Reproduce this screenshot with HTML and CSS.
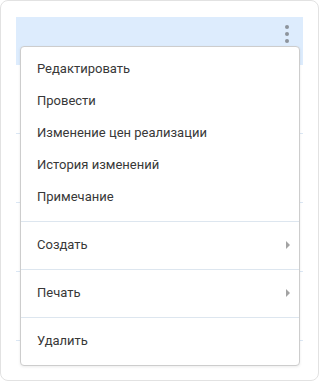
FILE: index.html
```html
<!DOCTYPE html>
<html>
<head>
    <title>Документ</title>
    <link rel="stylesheet" href="styles.css">
</head>
<body>
    <div class="card">
        <div class="table">
            <div class="table-head">
                <button class="kebab" aria-label="Действия">
                    <span></span><span></span><span></span>
                </button>
            </div>
            <div class="table-row"></div>
            <div class="table-row"></div>
            <div class="table-row"></div>
            <div class="table-row"></div>
        </div>

        <!-- Выпадающее меню действий -->
        <div class="menu">
            <div class="menu-group">
                <div class="menu-item">Редактировать</div>
                <div class="menu-item">Провести</div>
                <div class="menu-item">Изменение цен реализации</div>
                <div class="menu-item">История изменений</div>
                <div class="menu-item">Примечание</div>
            </div>
            <div class="menu-group">
                <div class="menu-item has-sub">Создать</div>
            </div>
            <div class="menu-group">
                <div class="menu-item has-sub">Печать</div>
            </div>
            <div class="menu-group">
                <div class="menu-item">Удалить</div>
            </div>
        </div>
    </div>
</body>
</html>
```

FILE: styles.css
```css
body {
    margin: 0;
    padding: 0;
    background-color: #fff;
    font-family: Roboto, Arial, sans-serif;
    color: #383838;
}

.card {
    position: relative;
    box-sizing: border-box;
    width: 319px;
    height: 381px;
    padding: 16px 15px;
    border: 1px solid #e2e2e2;
    border-radius: 8px;
    background-color: #fff;
}

.table-head {
    display: flex;
    justify-content: flex-end;
    align-items: flex-start;
    height: 48px;
    background-color: #ddecfd;
}

.table-row {
    height: 68px;
    border-bottom: 1px solid #dbe7f4;
}

.kebab {
    display: flex;
    flex-direction: column;
    gap: 3px;
    margin: 8px 14px 0 0;
    padding: 0;
    border: none;
    background: none;
}

.kebab span {
    display: block;
    width: 4px;
    height: 4px;
    border-radius: 50%;
    background-color: #8d949c;
}

.menu {
    position: absolute;
    left: 19px;
    top: 45px;
    width: 280px;
    box-sizing: border-box;
    border: 1px solid #cdcdcd;
    border-radius: 4px;
    background-color: #fff;
    box-shadow: 0 1px 3px rgba(0, 0, 0, 0.08);
}

.menu-group {
    padding: 7px 0 8px;
    border-top: 1px solid #dde6ef;
}

.menu-group:first-child {
    padding: 6px 0 8px;
    border-top: none;
}

.menu-item {
    position: relative;
    height: 32px;
    line-height: 31px;
    padding: 0 16px;
    font-size: 13px;
    white-space: nowrap;
}

.menu-item.has-sub::after {
    content: "";
    position: absolute;
    right: 9px;
    top: 12px;
    border-top: 4px solid transparent;
    border-bottom: 4px solid transparent;
    border-left: 4px solid #a3a3a3;
}
```
